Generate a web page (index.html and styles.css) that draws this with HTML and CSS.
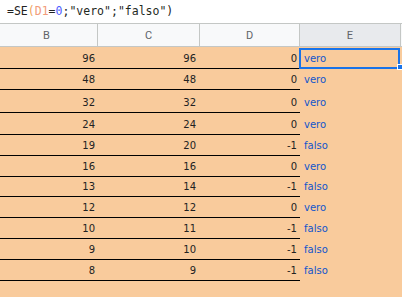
FILE: index.html
```html
<!DOCTYPE html>
<html>
<head>
<meta charset="utf-8">
<link rel="stylesheet" href="styles.css">
</head>
<body>
<div class="formula"><span class="op">=SE</span><span class="paren">(</span><span class="ref">D1</span><span class="op">=</span><span class="num">0</span><span class="op">;</span><span class="str">"vero"</span><span class="op">;</span><span class="str">"falso"</span><span class="op">)</span></div>
<div class="sheet">
  <div class="head">
    <div class="hc">B</div>
    <div class="hc">C</div>
    <div class="hc">D</div>
    <div class="hc sel">E</div>
  </div>
  <div class="row r22"><div class="c n">96</div><div class="c n">96</div><div class="c n">0</div><div class="c t active">vero<span class="selbox"></span><span class="handle"></span></div></div>
  <div class="row"><div class="c n">48</div><div class="c n">48</div><div class="c n">0</div><div class="c t">vero</div></div>
  <div class="row r23"><div class="c n">32</div><div class="c n">32</div><div class="c n">0</div><div class="c t">vero</div></div>
  <div class="row r22"><div class="c n">24</div><div class="c n">24</div><div class="c n">0</div><div class="c t">vero</div></div>
  <div class="row"><div class="c n">19</div><div class="c n">20</div><div class="c n">-1</div><div class="c t">falso</div></div>
  <div class="row"><div class="c n">16</div><div class="c n">16</div><div class="c n">0</div><div class="c t">vero</div></div>
  <div class="row r20"><div class="c n">13</div><div class="c n">14</div><div class="c n">-1</div><div class="c t">falso</div></div>
  <div class="row"><div class="c n">12</div><div class="c n">12</div><div class="c n">0</div><div class="c t">vero</div></div>
  <div class="row"><div class="c n">10</div><div class="c n">11</div><div class="c n">-1</div><div class="c t">falso</div></div>
  <div class="row"><div class="c n">9</div><div class="c n">10</div><div class="c n">-1</div><div class="c t">falso</div></div>
  <div class="row"><div class="c n">8</div><div class="c n">9</div><div class="c n">-1</div><div class="c t">falso</div></div>
  <div class="filler"></div>
</div>
</body>
</html>
```

FILE: styles.css
```css
html, body {
  margin: 0;
  padding: 0;
  width: 402px;
  height: 297px;
  overflow: hidden;
  background: #ffffff;
}

.formula {
  height: 23px;
  box-sizing: border-box;
  padding: 3px 0 0 7px;
  font-family: "DejaVu Sans Mono", "Liberation Mono", monospace;
  font-size: 11.5px;
  line-height: 16px;
  color: #222222;
  white-space: pre;
}
.formula .op { color: #222222; }
.formula .paren { color: #f0a35a; }
.formula .ref { color: #f29c7a; }
.formula .num { color: #4b5cff; }
.formula .str { color: #1f2a1f; }

.sheet {
  margin-left: -4px;
  width: 410px;
  background: #f9cb9c;
}

.head {
  display: grid;
  grid-template-columns: 102px 102px 100px 101px 5px;
  height: 24px;
  box-sizing: border-box;
  border-top: 1px solid #c4c7c5;
  border-bottom: 1px solid #c4c7c5;
  background: #f8f9fa;
}
.hc {
  display: flex;
  align-items: center;
  justify-content: center;
  border-right: 1px solid #c4c7c5;
  font-family: Roboto, "Liberation Sans", sans-serif;
  font-size: 11px;
  color: #5f6368;
}
.hc.sel {
  background: #e8eaed;
}

.row {
  display: grid;
  grid-template-columns: 102px 102px 100px 101px;
  height: 21px;
  font-family: "DejaVu Sans", Verdana, sans-serif;
  font-size: 10px;
}
.row.r22 { height: 22px; }
.row.r23 { height: 23px; }
.row.r20 { height: 20px; }

.c {
  display: flex;
  align-items: flex-end;
  padding-bottom: 4px;
  box-sizing: border-box;
  white-space: nowrap;
}
.c.n {
  justify-content: flex-end;
  padding-right: 3px;
  color: #222222;
  border-bottom: 1px solid #000000;
}
.c.n:nth-child(2) { padding-right: 4px; }
.c.t {
  padding-left: 4px;
  color: #1155cc;
  padding-bottom: 5px;
}
.c.active {
  position: relative;
}
.selbox {
  position: absolute;
  left: -1px;
  top: 1px;
  width: 101px;
  height: 21px;
  box-sizing: border-box;
  border: 2px solid #1a73e8;
}
.handle {
  position: absolute;
  left: 97px;
  top: 17px;
  width: 6px;
  height: 6px;
  background: #1a73e8;
  border: 1px solid #ffffff;
  box-sizing: border-box;
}

.filler {
  height: 30px;
}
```
